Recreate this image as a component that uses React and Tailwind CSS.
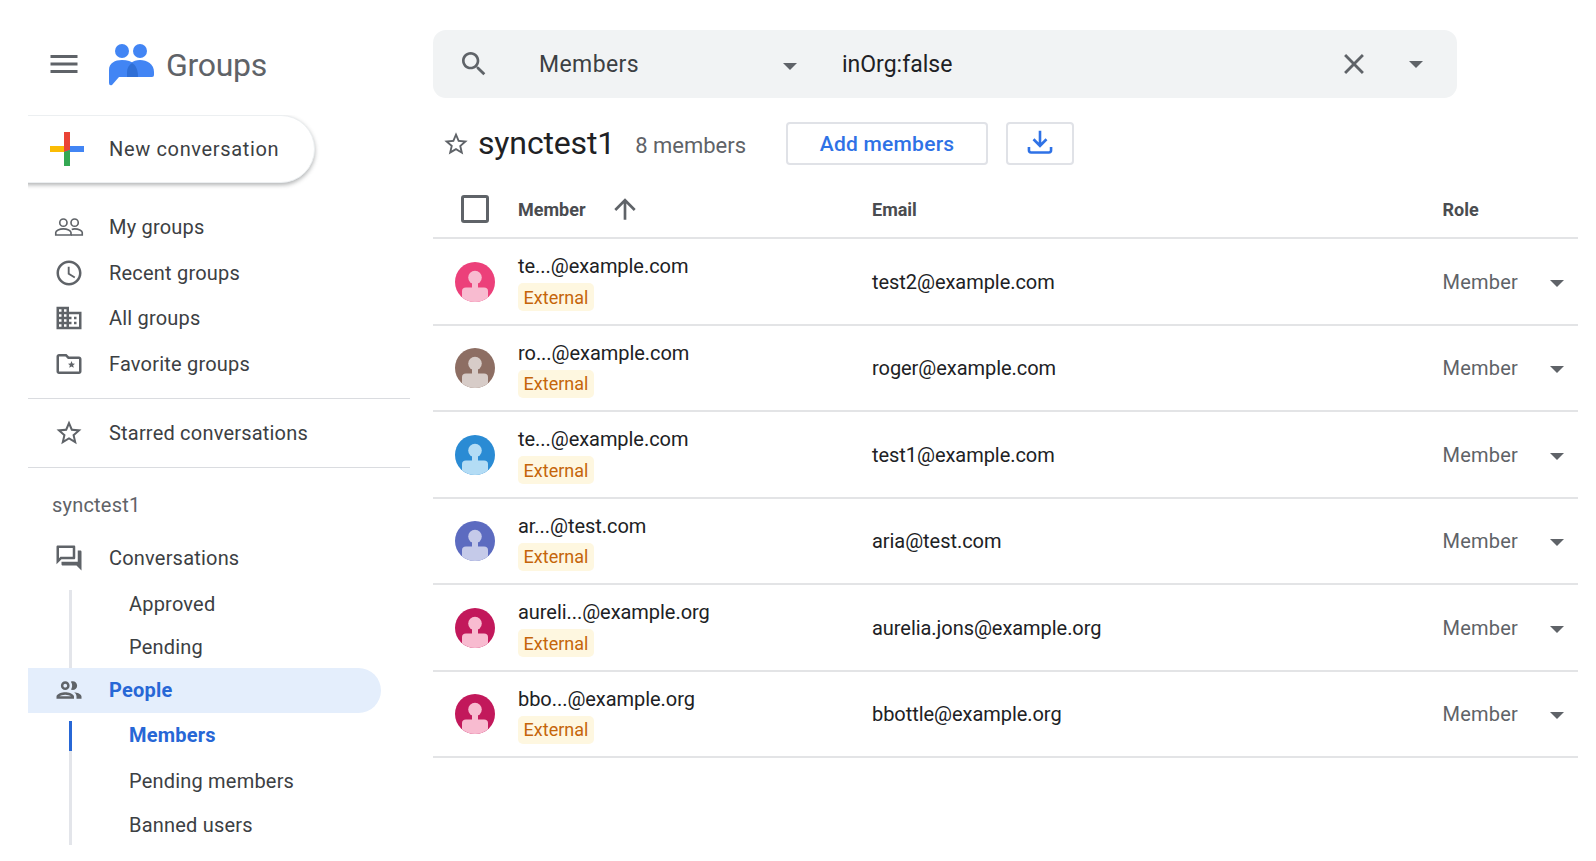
const MEMBERS = [
  { short: "te...@example.com", email: "test2@example.com", bg: "#ec407a", fg: "#f8bbd0" },
  { short: "ro...@example.com", email: "roger@example.com", bg: "#8d6e63", fg: "#d7ccc8" },
  { short: "te...@example.com", email: "test1@example.com", bg: "#2a8bd4", fg: "#b3dcf5" },
  { short: "ar...@test.com", email: "aria@test.com", bg: "#5c6bc0", fg: "#c5cae9" },
  { short: "aureli...@example.org", email: "aurelia.jons@example.org", bg: "#c2185b", fg: "#f8bbd0" },
  { short: "bbo...@example.org", email: "bbottle@example.org", bg: "#c2185b", fg: "#f8bbd0" },
];

const PATHS = {
  menu: "M3 18h18v-2H3v2zm0-5h18v-2H3v2zm0-7v2h18V6H3z",
  search:
    "M15.5 14h-.79l-.28-.27C15.41 12.59 16 11.11 16 9.5 16 5.91 13.09 3 9.5 3S3 5.91 3 9.5 5.91 16 9.5 16c1.61 0 3.09-.59 4.23-1.57l.27.28v.79l5 4.99L20.49 19l-4.99-5zm-6 0C7.01 14 5 11.99 5 9.5S7.01 5 9.5 5 14 7.01 14 9.5 11.99 14 9.5 14z",
  close:
    "M19 6.41L17.59 5 12 10.59 6.41 5 5 6.41 10.59 12 5 17.59 6.41 19 12 13.41 17.59 19 19 17.59 13.41 12z",
  star: "M22 9.24l-7.19-.62L12 2 9.19 8.63 2 9.24l5.46 4.73L5.82 21 12 17.27 18.18 21l-1.63-7.03L22 9.24zM12 15.4l-3.76 2.27 1-4.28-3.32-2.88 4.38-.38L12 6.1l1.71 4.04 4.38.38-3.32 2.88 1 4.28L12 15.4z",
  clock:
    "M11.99 2C6.47 2 2 6.48 2 12s4.47 10 9.99 10C17.52 22 22 17.52 22 12S17.52 2 11.99 2zM12 20c-4.42 0-8-3.58-8-8s3.58-8 8-8 8 3.58 8 8-3.58 8-8 8zm.5-13H11v6l5.25 3.15.75-1.23-4.5-2.67z",
  domain:
    "M12 7V3H2v18h20V7H12zM6 19H4v-2h2v2zm0-4H4v-2h2v2zm0-4H4V9h2v2zm0-4H4V5h2v2zm4 12H8v-2h2v2zm0-4H8v-2h2v2zm0-4H8V9h2v2zm0-4H8V5h2v2zm10 12h-8v-2h2v-2h-2v-2h2v-2h-2V9h8v10zm-2-8h-2v2h2v-2zm0 4h-2v2h2v-2z",
  folderStar:
    "M20 6h-8l-2-2H4c-1.1 0-2 .9-2 2v12c0 1.1.9 2 2 2h16c1.1 0 2-.9 2-2V8c0-1.1-.9-2-2-2zm0 12H4V6h5.17l2 2H20v10zM14 9.6l.8 1.9 2 .2-1.5 1.3.5 2-1.8-1.1-1.8 1.1.5-2-1.5-1.3 2-.2z",
  forum:
    "M15 4v7H5.17L4 12.17V4h11m1-2H3c-.55 0-1 .45-1 1v14l4-4h10c.55 0 1-.45 1-1V3c0-.55-.45-1-1-1zm5 4h-2v9H6v2c0 .55.45 1 1 1h11l4 4V7c0-.55-.45-1-1-1z",
  people:
    "M9 13.75c-2.34 0-7 1.17-7 3.5V19h14v-1.75c0-2.33-4.66-3.5-7-3.5zM4.34 17c.84-.58 2.87-1.25 4.66-1.25s3.82.67 4.66 1.25H4.34zM9 12c1.93 0 3.5-1.57 3.5-3.5S10.93 5 9 5 5.5 6.57 5.5 8.5 7.07 12 9 12zm0-5c.83 0 1.5.67 1.5 1.5S9.83 10 9 10s-1.5-.67-1.5-1.5S8.17 7 9 7zm7.04 6.81c1.16.84 1.96 1.96 1.96 3.44V19h4v-1.75c0-2.02-3.5-3.17-5.96-3.44zM15 12c1.93 0 3.5-1.57 3.5-3.5S16.93 5 15 5c-.54 0-1.04.13-1.5.35.63.89 1 1.98 1 3.15s-.37 2.26-1 3.15c.46.22.96.35 1.5.35z",
  arrowUp: "M4 12l1.41 1.41L11 7.83V20h2V7.83l5.58 5.59L20 12l-8-8-8 8z",
};

function Icon({ name, className }) {
  // the "My groups" glyph is thinner in the screenshot than the stock outline
  if (name === "groups") {
    return (
      <svg viewBox="0 0 24 24" className={className} fill="none" stroke="currentColor" strokeWidth="1.3">
        <circle cx="7.5" cy="8.5" r="2.9" />
        <circle cx="16.5" cy="8.5" r="2.9" />
        <path d="M1.4 18.4v-2c0-1.6 3-2.9 6.1-2.9s6.1 1.3 6.1 2.9v2z" />
        <path d="M14.2 14c.7-.3 1.5-.5 2.3-.5 3.1 0 6.1 1.3 6.1 2.9v2h-9" />
      </svg>
    );
  }
  return (
    <svg viewBox="0 0 24 24" className={className} fill="currentColor">
      <path d={PATHS[name]} />
    </svg>
  );
}

function Caret({ className }) {
  return (
    <svg viewBox="0 0 14 7" className={`w-[14px] h-[7px] text-[#5f6368] ${className ?? ""}`} fill="currentColor">
      <path d="M0 0h14L7 7z" />
    </svg>
  );
}

function GroupsLogo() {
  return (
    <svg viewBox="0 0 45 43" className="w-[45px] h-[43px] shrink-0">
      <circle cx="13" cy="8" r="7" fill="#4285f4" />
      <circle cx="31" cy="8" r="7" fill="#4285f4" />
      <path d="M0 27C0 20 6 17 13 17C24 17 29 22 29 34L10 34L3 42Q0 43 0 40Z" fill="#4285f4" />
      <path d="M18 34V29C18 21 24 17 31 17C38 17 45 21 45 29V32Q45 34 43 34Z" fill="#4285f4" />
      <path d="M18 34V29C18 25 20 22 23 20C27 22 29 27 29 34Z" fill="#2f6fd6" />
    </svg>
  );
}

function PlusIcon() {
  return (
    <svg viewBox="0 0 34 34" className="w-[34px] h-[34px] shrink-0">
      <rect x="14" y="0" width="6" height="18" fill="#ea4335" />
      <rect x="0" y="14" width="15" height="6" fill="#fbbc04" />
      <rect x="15" y="14" width="19" height="6" fill="#4285f4" />
      <rect x="14" y="20" width="6" height="14" fill="#34a853" />
      <path d="M14 14h6v4l-6 2z" fill="#ea4335" />
      <path d="M14 20l6-2v2z" fill="#34a853" />
    </svg>
  );
}

function Avatar({ bg, fg }) {
  return (
    <svg viewBox="0 0 40 40" className="w-[40px] h-[40px]">
      <circle cx="20" cy="20" r="20" fill={bg} />
      <circle cx="20" cy="15.5" r="6.8" fill={fg} />
      <rect x="17" y="21" width="6" height="5" fill={fg} />
      <path d="M7 35.2V29Q7 25.5 11 25.5H29Q33 25.5 33 29V35.2A20 20 0 0 1 7 35.2Z" fill={fg} />
    </svg>
  );
}

function NavRow({ icon, label, active }) {
  return (
    <div
      className={`flex items-center h-[45.5px] text-[20px] tracking-[0.2px] rounded-r-full ${
        active ? "bg-[#e4eefc] text-[#2767d6] font-bold" : "text-[#3c4043]"
      }`}
    >
      <Icon name={icon} className="w-[30px] h-[30px] ml-[26px] mr-[25px] text-[#5f6368] shrink-0" />
      {label}
    </div>
  );
}

function SubRow({ label, active, height = "h-[28px]" }) {
  return (
    <div
      className={`flex items-center text-[20px] tracking-[0.2px] ${height} ${
        active
          ? "pl-[57px] pb-[2px] font-bold text-[#2767d6] border-l-[3px] border-[#2767d6] -ml-[3px]"
          : "pl-[57px] text-[#3c4043]"
      }`}
    >
      {label}
    </div>
  );
}

function Sidebar() {
  return (
    <aside className="w-[433px] shrink-0 pl-[28px] pr-[23px] overflow-hidden">
      <div className="flex items-center h-[115px] pt-[13px]">
        <Icon name="menu" className="w-[36px] h-[36px] ml-[18px] text-[#5f6368] shrink-0" />
        <div className="ml-[27px]">
          <GroupsLogo />
        </div>
        <span className="ml-[12px] mt-[2px] text-[32px] text-[#5f6368] tracking-[-0.3px]">Groups</span>
      </div>

      <div className="relative overflow-hidden h-[78px] -mb-[10px] w-[300px]">
        <div className="flex items-center h-[68px] w-[320px] -ml-[33px] pl-[54px] pr-4 rounded-full bg-white shadow-[0_2px_4px_rgba(60,64,67,0.4)] border border-[#eceff1] text-[20px] tracking-[0.65px] font-[450] text-[#3c4043]">
          <PlusIcon />
          <span className="ml-[25px]">New conversation</span>
        </div>
      </div>

      <div className="pt-[21.5px]">
        <NavRow icon="groups" label="My groups" />
        <NavRow icon="clock" label="Recent groups" />
        <NavRow icon="domain" label="All groups" />
        <NavRow icon="folderStar" label="Favorite groups" />
      </div>

      <div className="border-t border-[#dadce0] mt-[11px] mb-[12px]" />
      <NavRow icon="star" label="Starred conversations" />
      <div className="border-t border-[#dadce0] mt-[11px]" />

      <div className="flex items-center h-[40px] mt-[17px] pl-[24px] text-[20px] tracking-[0.2px] text-[#5f6368]">
        synctest1
      </div>

      <div className="mt-[10px]">
        <NavRow icon="forum" label="Conversations" />
      </div>
      <div className="ml-[41px] mt-[9px] border-l-[3px] border-[#e3e5ea] pb-[7px] flex flex-col gap-[15px]">
        <SubRow label="Approved" />
        <SubRow label="Pending" />
      </div>

      <div className="w-[353px]">
        <NavRow icon="people" label="People" active />
      </div>

      <div className="ml-[41px] mt-[8px] border-l-[3px] border-[#e3e5ea] pb-[5px] flex flex-col gap-[14.5px]">
        <SubRow label="Members" active height="h-[30px]" />
        <SubRow label="Pending members" height="h-[30px]" />
        <SubRow label="Banned users" height="h-[30px]" />
      </div>
    </aside>
  );
}

function SearchBar() {
  return (
    <div className="flex items-center w-[1024px] h-[68px] bg-[#f1f3f4] rounded-[13px]">
      <Icon name="search" className="w-[32px] h-[32px] ml-[25px] text-[#5f6368]" />
      <span className="ml-[49px] mt-[2px] w-[244px] text-[23px] tracking-[0.4px] text-[#3c4043]">Members</span>
      <Caret className="mt-[4px]" />
      <span className="ml-[45px] mt-[2px] text-[23px] text-[#202124] flex-1">inOrg:false</span>
      <Icon name="close" className="w-[34px] h-[34px] text-[#5f6368]" />
      <Caret className="ml-[38px] mr-[34px]" />
    </div>
  );
}

function TitleRow() {
  return (
    <div className="flex items-center h-[43px] mt-[24px]">
      <Icon name="star" className="w-[28px] h-[28px] ml-[9px] text-[#5f6368]" />
      <h1 className="ml-[8px] -mt-[2px] text-[32px] text-[#202124] tracking-[-0.15px]">synctest1</h1>
      <span className="ml-[20px] text-[22px] text-[#5f6368] mt-[3px]">8 members</span>
      <button className="ml-[40px] w-[202px] h-[43px] pt-[2px] rounded-[4px] border-2 border-[#e0e2e7] text-[21px] font-medium tracking-[0.25px] text-[#2f72e6]">
        Add members
      </button>
      <button className="ml-[18px] w-[68px] h-[43px] rounded-[4px] border-2 border-[#e0e2e7] flex items-center justify-center text-[#2f72e6]">
        <svg viewBox="0 0 24 24" className="w-[26px] h-[26px] -mt-[3px]" fill="none" stroke="currentColor" strokeWidth="2.4">
          <path d="M12 1.5v13.5M6 9.5l6 6 6-6" />
          <path d="M1.8 16.5v3.2q0 2 2 2h16.4q2 0 2-2v-3.2" />
        </svg>
      </button>
    </div>
  );
}

function MemberRow({ member }) {
  return (
    <div className="grid grid-cols-[85px_354px_570.5px_135.5px] items-center h-[86.5px] border-b-2 border-[#e3e4e6]">
      <div className="pl-[22px]">
        <Avatar bg={member.bg} fg={member.fg} />
      </div>
      <div className="flex flex-col items-start">
        <span className="text-[20px] leading-[28px] tracking-[-0.05px] text-[#202124]">{member.short}</span>
        <span className="mt-[3px] w-[76px] h-[28px] flex items-center justify-center rounded-[5px] bg-[#fef7e0] text-[18px] text-[#c5650a]">
          External
        </span>
      </div>
      <span className="text-[20px] tracking-[-0.05px] text-[#202124]">{member.email}</span>
      <div className="flex items-center justify-between pr-[14px] text-[20px] tracking-[0.2px] text-[#5f6368]">
        Member
        <Caret className="mt-[3px]" />
      </div>
    </div>
  );
}

export default function App() {
  return (
    <div
      className="flex h-screen overflow-hidden bg-white"
      style={{ fontFamily: "Roboto, 'Liberation Sans', sans-serif" }}
    >
      <Sidebar />
      <main className="flex-1 pt-[30px] pr-[18px]">
        <SearchBar />
        <TitleRow />
        <div className="grid grid-cols-[85px_354px_570.5px_135.5px] items-center h-[74.25px] pt-[16px] border-b-2 border-[#e3e4e6] text-[18px] font-bold text-[#4a4c50]">
          <div className="pl-[28px]">
            <div className="w-[28px] h-[28px] rounded-[3px] border-[3px] border-[#5f6368]" />
          </div>
          <div className="flex items-center">
            Member
            <Icon name="arrowUp" className="w-[32px] h-[32px] ml-[23px] text-[#5f6368]" />
          </div>
          <span>Email</span>
          <span>Role</span>
        </div>
        {MEMBERS.map((member) => (
          <MemberRow key={member.email} member={member} />
        ))}
      </main>
    </div>
  );
}
